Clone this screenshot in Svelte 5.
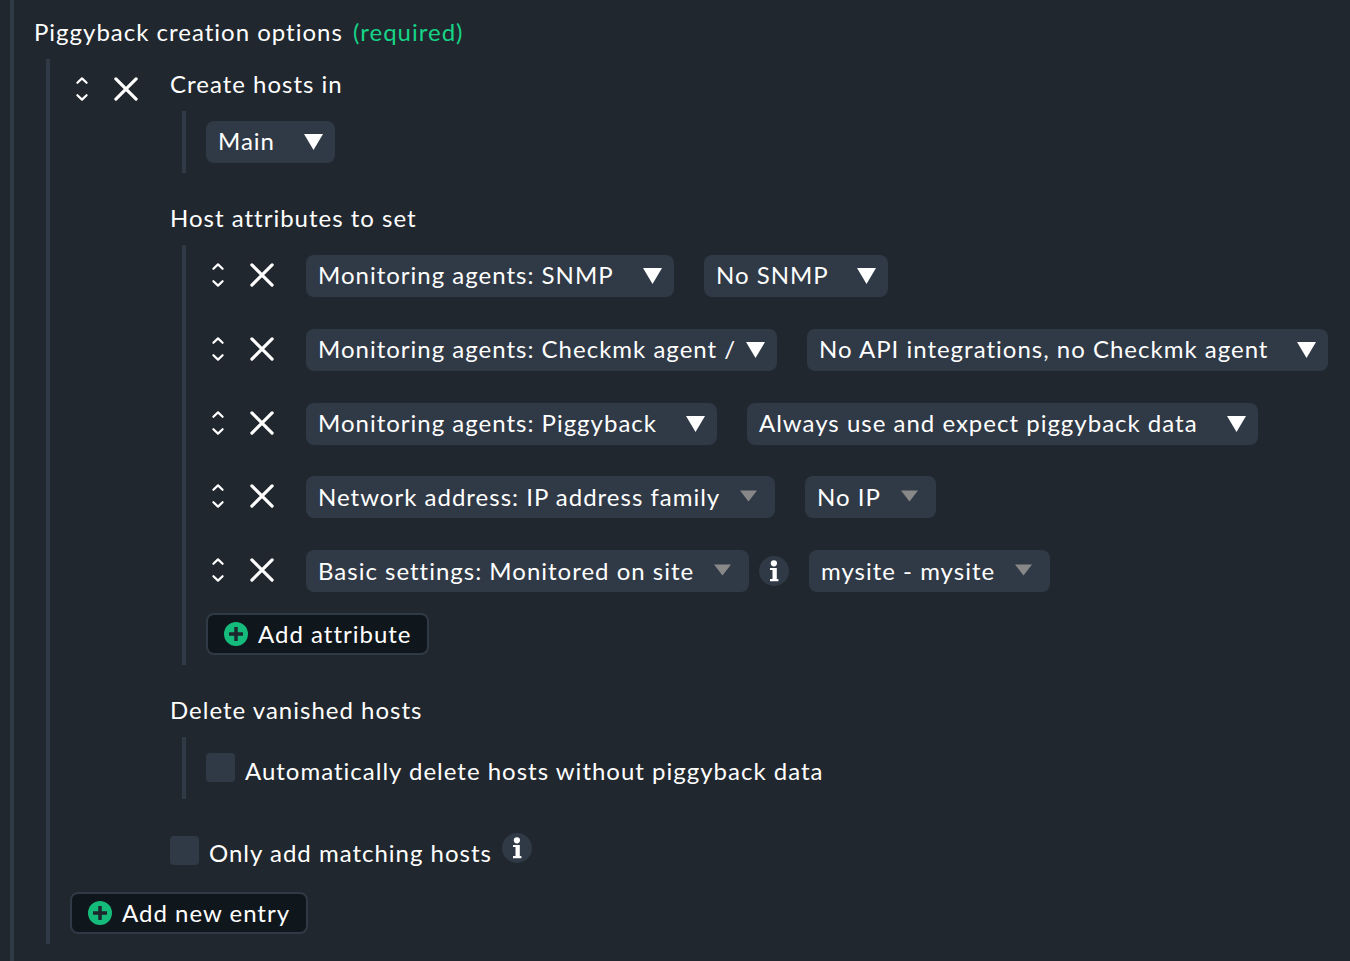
<script>
  const rows = [
    {
      attribute: { label: 'Monitoring agents: SNMP', width: 368 },
      value: { label: 'No SNMP', width: 184 },
    },
    {
      attribute: { label: 'Monitoring agents: Checkmk agent /', width: 471 },
      value: { label: 'No API integrations, no Checkmk agent', width: 521 },
    },
    {
      attribute: { label: 'Monitoring agents: Piggyback', width: 411 },
      value: { label: 'Always use and expect piggyback data', width: 511 },
    },
    {
      attribute: { label: 'Network address: IP address family', width: 469 },
      value: { label: 'No IP', width: 131 },
      muted: true,
    },
    {
      attribute: { label: 'Basic settings: Monitored on site', width: 443 },
      value: { label: 'mysite - mysite', width: 241 },
      muted: true,
      info: true,
    },
  ];
</script>

{#snippet controls()}
  <div class="controls">
    <svg width="24" height="28" viewBox="0 0 24 28" aria-hidden="true">
      <path d="M7.4 7.8 12 3.4l4.6 4.4M7.4 20.2 12 24.6l4.6-4.4" />
    </svg>
    <svg class="remove" width="24" height="28" viewBox="0 0 24 28" aria-hidden="true">
      <path d="M1.9 3.9l20.2 20.2M22.1 3.9l-20.2 20.2" />
    </svg>
  </div>
{/snippet}

{#snippet select(label, width, muted)}
  <div class="select" class:muted style="width: {width}px">
    <span>{label}</span>
    <svg class="arrow" width="19" height="16" viewBox="0 0 19 16" aria-hidden="true">
      {#if muted}
        <path d="M1 2.6H18L9.5 13.4Z" />
      {:else}
        <path d="M0 0H19L9.5 16Z" />
      {/if}
    </svg>
  </div>
{/snippet}

{#snippet info()}
  <svg class="info" width="30" height="30" viewBox="0 0 30 30" aria-hidden="true">
    <circle cx="15" cy="15" r="15" fill="#303946" />
    <circle cx="14.9" cy="7.3" r="3.1" fill="#fff" />
    <path d="M11 12h6.8v10.9h1.6v2.3H11v-2.3h2.5V14.1H11z" fill="#fff" />
  </svg>
{/snippet}

{#snippet add(label, width)}
  <button style="width: {width}px">
    <svg width="24" height="24" viewBox="0 0 24 24" aria-hidden="true">
      <circle cx="12" cy="12" r="12" fill="#15bb7b" />
      <path d="M5 12h14M12 5v14" stroke="#1e262e" stroke-width="3.5" />
    </svg>
    <span>{label}</span>
  </button>
{/snippet}

<main>
  <div class="title">Piggyback creation options <span class="required">(required)</span></div>
  <div class="group entries">
    <div class="entry">
      {@render controls()}
      <div class="fields">
        <div class="label">Create hosts in</div>
        <div class="group folder">{@render select('Main', 129, false)}</div>

        <div class="label">Host attributes to set</div>
        <div class="group attributes">
          <div class="rows">
            {#each rows as row}
              <div class="row">
                {@render controls()}
                {@render select(row.attribute.label, row.attribute.width, row.muted)}
                <div class="gap" class:wide={row.info}>
                  {#if row.info}{@render info()}{/if}
                </div>
                {@render select(row.value.label, row.value.width, row.muted)}
              </div>
            {/each}
          </div>
          {@render add('Add attribute', 223)}
        </div>

        <div class="label">Delete vanished hosts</div>
        <div class="group vanished">
          <div class="check"><i></i><span>Automatically delete hosts without piggyback data</span></div>
        </div>

        <div class="check matching">
          <i></i><span>Only add matching hosts</span>{@render info()}
        </div>
      </div>
    </div>
    {@render add('Add new entry', 238)}
  </div>
</main>

<style>
  :global(body) {
    background: #21272e;
  }

  main {
    box-sizing: border-box;
    width: 1350px;
    height: 961px;
    overflow: hidden;
    padding: 17px 0 0 34px;
    background: linear-gradient(#303946, #303946) 10px 0 / 4px 100% no-repeat #21272e;
    color: #fff;
    font: 24px/30px Lato, sans-serif;
    letter-spacing: 1px;
    white-space: nowrap;
  }

  .required {
    margin-left: 3px;
    color: #15d387;
  }

  .group {
    box-sizing: border-box;
    margin-left: 12px;
    padding: 10px 0 10px 20px;
    border-left: 4px solid #303946;
  }

  .entries {
    margin-top: 12px;
    height: 885px;
  }

  .entry {
    display: flex;
    height: 823px;
  }

  .controls {
    display: flex;
    flex: none;
    gap: 20px;
    width: 100px;
    padding-top: 6px;
  }

  .controls path {
    fill: none;
    stroke: #fff;
    stroke-width: 2.2;
    stroke-linecap: round;
    stroke-linejoin: round;
  }

  .controls .remove path {
    stroke-width: 3.2;
  }

  .label {
    height: 42px;
  }

  .folder {
    height: 62px;
    margin-bottom: 30px;
  }

  .attributes {
    height: 420px;
    margin-bottom: 30px;
  }

  .rows {
    display: flex;
    flex-direction: column;
    gap: 31.75px;
    margin-bottom: 21px;
  }

  .row {
    display: flex;
    height: 42px;
  }

  .gap {
    flex: none;
    width: 30px;
  }

  .gap.wide {
    box-sizing: border-box;
    width: 60px;
    padding: 6px 0 0 10px;
  }

  .select {
    box-sizing: border-box;
    display: flex;
    flex: none;
    justify-content: space-between;
    height: 42px;
    padding: 5px 12px 0;
    border-radius: 8px;
    background: #303946;
  }

  .arrow {
    flex: none;
    margin-top: 8px;
    fill: #fff;
  }

  .muted {
    padding: 6px 17px 0 12px;
  }

  .muted .arrow {
    margin-top: 6px;
    fill: #888;
  }

  .info {
    display: block;
    flex: none;
  }

  button {
    display: flex;
    align-items: center;
    gap: 10px;
    box-sizing: border-box;
    height: 42px;
    padding: 0 0 0 16px;
    border: 2px solid #303946;
    border-radius: 8px;
    background: #10171c;
    color: inherit;
    font: inherit;
    letter-spacing: inherit;
  }

  .vanished {
    height: 62px;
    padding-top: 16px;
    margin-bottom: 37px;
  }

  .check {
    display: flex;
    gap: 10px;
  }

  .check i {
    flex: none;
    width: 29px;
    height: 29px;
    border-radius: 4px;
    background: #303946;
  }

  .check span {
    padding-top: 3px;
  }

  .matching span {
    padding-top: 2px;
  }

  .matching .info {
    margin-top: -3px;
  }
</style>
